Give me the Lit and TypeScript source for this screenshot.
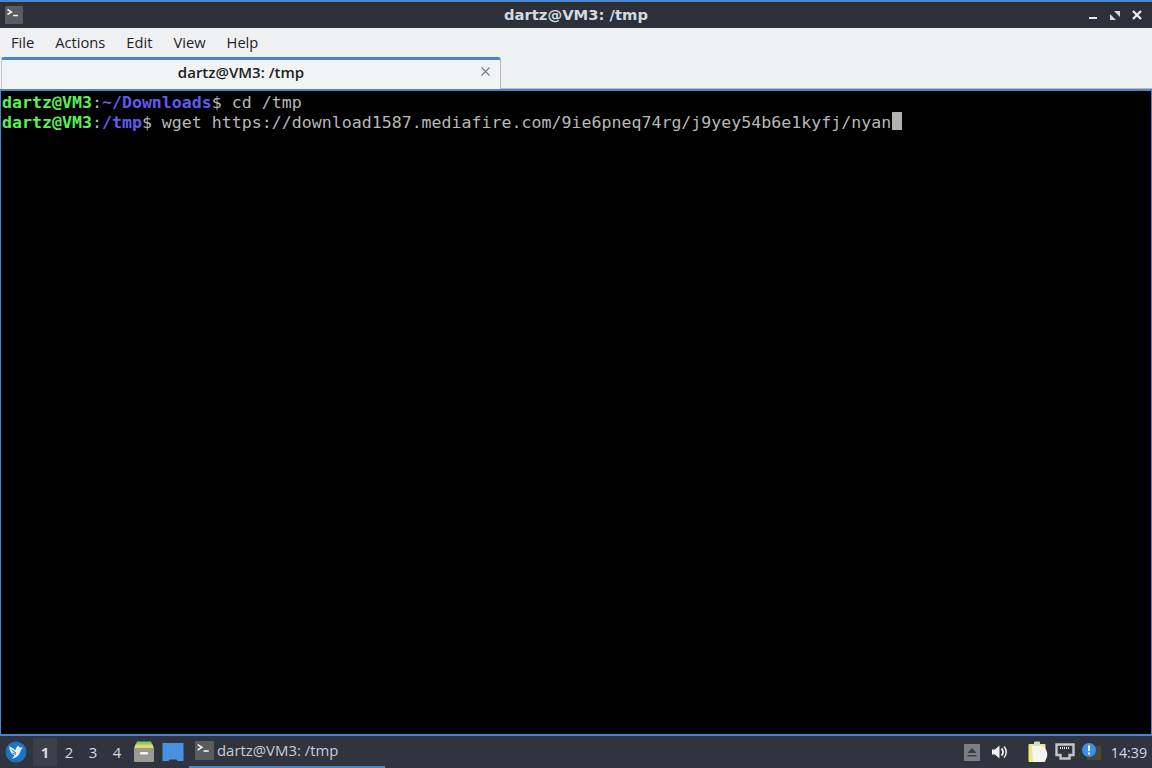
import { LitElement, html, css } from "lit";
import { customElement } from "lit/decorators.js";

const termIcon = (s: number) => html`<svg width=${s} height=${s} viewBox="0 0 18 18" class="ti">
  <rect width="18" height="18" rx="1" fill="#5a5d60"/>
  <path d="M2.5 3.5 L6.5 6 L2.5 8.5" fill="none" stroke="#f2f2f2" stroke-width="1.5"/>
  <path d="M8 9.5 H13" stroke="#f2f2f2" stroke-width="1.5"/>
</svg>`;

@customElement("app-root")
export class AppRoot extends LitElement {
  static styles = css`
    :host { display: block; width: 1152px; height: 768px; overflow: hidden; background: #2f343f; }
    .win { width: 1152px; height: 768px; display: flex; flex-direction: column; }
    .titlebar { height: 28px; box-sizing: border-box; flex: none; background: #2d3038; border-top: 2px solid #4a86c8; display: grid; grid-template-columns: 1fr auto 1fr; align-items: center; padding: 0 5px; }
    .titlebar .ti { display: block; margin-top: -1px; }
    .title { font: bold 14.75px "DejaVu Sans", sans-serif; color: #d3dae3; margin-top: -2px; }
    .wbtns { display: flex; justify-content: flex-end; gap: 12px; padding-right: 5px; align-items: center; margin-top: -1px; }
    .wbtns svg { display: block; }
    .menubar { height: 29px; flex: none; box-sizing: border-box; padding: 0 10px 2px 11px; background: #eff0f1; display: flex; align-items: center; gap: 21px; font: 14.7px "Open Sans", sans-serif; color: #1f2328; }
    .tabbar { height: 32px; flex: none; box-sizing: border-box; background: #eff0f1; display: flex; }
    .tab { width: 500px; margin-left: 1px; box-sizing: border-box; border-top: 3px solid #4a86c8; border-right: 1px solid #b4b6b8; border-left: 1px solid #c8cacc; border-radius: 3px 3px 0 0; background: #f2f3f4; display: flex; align-items: center; position: relative; justify-content: center; font: 600 15px "Open Sans", sans-serif; color: #1b1e22; padding-right: 20px; padding-bottom: 5px; }
    .tab svg { position: absolute; right: 9px; top: 6px; }
    .tabrest { flex: 1; border-bottom: 1px solid #b9bbbd; }
    .term { flex: 1; background: #000; box-sizing: border-box; border: 1px solid #4a86c8; border-top-width: 2px; border-bottom-width: 2px; padding-top: 2px; padding-left: 1px; font: 16.6px/20px "DejaVu Sans Mono", monospace; color: #b8b8b8; }
    .line { height: 20px; display: flex; white-space: pre; }
    .g { color: #5af05a; font-weight: bold; }
    .b { color: #5c5cf0; font-weight: bold; }
    .cursor { display: block; width: 10px; height: 18px; margin-top: -1px; margin-left: 1px; background: #b2b2b2; }
    .panel { height: 32px; flex: none; background: #2f343f; display: flex; align-items: center; font: 14.9px "Open Sans", sans-serif; color: #d3dae3; }
    .start { margin-left: 5px; width: 22px; height: 22px; display: block; flex: none; }
    .pages { display: flex; margin-left: 6px; }
    .page { width: 24px; height: 28px; display: flex; align-items: center; justify-content: center; color: #d3dae3; }
    .page.on { background: #3a3f4a; font-weight: 700; }
    .launch { display: flex; gap: 7px; margin-left: 4px; align-items: center; }
    .launch svg { display: block; }
    .task { width: 196px; margin-left: 5px; height: 32px; box-sizing: border-box; border-bottom: 2px solid #4a86c8; display: flex; align-items: center; gap: 3px; padding: 0 0 2px 6px; color: #c8ced6; }
    .task .ti { display: block; }
    .tray { margin-left: auto; display: flex; align-items: center; padding-right: 5px; }
    .tray svg { display: block; }
    .eject { margin-right: 12px; }
    .vol { margin-right: 20px; }
    .clip { margin-right: 7px; }
    .net { margin-right: 6px; }
    .clock { font-size: 14.2px; color: #d3dae3; margin-left: 10px; }
  `;

  render() {
    return html`<div class="win">
      <div class="titlebar">
        <div>${termIcon(18)}</div>
        <div class="title">dartz@VM3: /tmp</div>
        <div class="wbtns">
          <svg width="10" height="10" viewBox="0 0 10 10"><path d="M1 8H9" stroke="#e6e8ec" stroke-width="2"/></svg>
          <svg width="10" height="10" viewBox="0 0 10 10"><path d="M4 1H10V7Z M0 4V10H6Z" fill="#d3dae3"/></svg>
          <svg width="10" height="10" viewBox="0 0 10 10"><path d="M1 1L9 9M9 1L1 9" stroke="#eceef2" stroke-width="2.2"/></svg>
        </div>
      </div>
      <div class="menubar"><span>File</span><span>Actions</span><span>Edit</span><span>View</span><span>Help</span></div>
      <div class="tabbar">
        <div class="tab">dartz@VM3: /tmp
          <svg width="11" height="11" viewBox="0 0 11 11"><path d="M1.5 1.5L9.5 9.5M9.5 1.5L1.5 9.5" stroke="#77797c" stroke-width="1.1"/></svg>
        </div>
        <div class="tabrest"></div>
      </div>
      <div class="term">
        <div class="line"><span class="g">dartz@VM3</span><span>:</span><span class="b">~/Downloads</span><span>$ cd /tmp</span></div>
        <div class="line"><span class="g">dartz@VM3</span><span>:</span><span class="b">/tmp</span><span>$ wget https://download1587.mediafire.com/9ie6pneq74rg/j9yey54b6e1kyfj/nyan</span><span class="cursor"></span></div>
      </div>
      <div class="panel">
        <svg class="start" viewBox="0 0 22 22">
          <circle cx="11" cy="11" r="10.5" fill="#1c74c6"/>
          <path d="M4 5.5 C7 6.5 9 7.5 10.5 9.5 C10.5 7.5 11.5 5.5 13.5 4.5 C13.5 6 15 6.8 18 6.5 C16 8 16 9.5 15 11.5 C13.5 15 10.5 17.5 7 17.5 C8.5 16 9.2 15 9.4 14 C7 14 4.8 10.5 4 5.5Z" fill="#e4f0fa"/>
          <path d="M6.5 9 L11 12 M7.5 12 L11 13.5" stroke="#1c74c6" stroke-width="1"/>
        </svg>
        <div class="pages">
          <div class="page on">1</div><div class="page">2</div><div class="page">3</div><div class="page">4</div>
        </div>
        <div class="launch">
          <svg width="22" height="22" viewBox="0 0 22 22">
            <path d="M4 0.5H18L19.5 4H2.5Z" fill="#7fc97a"/>
            <path d="M2.5 3.5H19.5L21 7.5H1Z" fill="#e8d86a"/>
            <rect x="1" y="7" width="20" height="14" rx="1" fill="#9a9a92"/>
            <rect x="7" y="11" width="8" height="2.5" rx="1" fill="#f4f4ee"/>
          </svg>
          <svg width="22" height="22" viewBox="0 0 22 22">
            <path d="M0.5 2H21.5V20H15.5L14.5 18.5H7.5L6.5 20H0.5Z" fill="#4a90e0"/>
          </svg>
        </div>
        <div class="task">${termIcon(19)}<span>dartz@VM3: /tmp</span></div>
        <div class="tray">
          <svg class="eject" width="16" height="17" viewBox="0 0 16 17"><rect width="16" height="17" fill="#7c7f84"/><path d="M8 4L12.5 9H3.5Z M3.5 11H12.5V12.5H3.5Z" fill="#3a3d42"/></svg>
          <svg class="vol" width="16" height="18" viewBox="0 0 16 18"><path d="M0 6.5H3L7.5 2.5V15.5L3 11.5H0Z" fill="#f2f3f5"/><path d="M9.5 5.5C11.5 7.5 11.5 10.5 9.5 12.5" fill="none" stroke="#f2f3f5" stroke-width="2"/><path d="M12 3.5C15 6.5 15 11.5 12 14.5" fill="none" stroke="#f2f3f5" stroke-width="1.5"/></svg>
          <svg class="clip" width="20" height="22" viewBox="0 0 20 22"><rect x="0.5" y="3" width="17" height="18" rx="1" fill="#f2e68a"/><rect x="6" y="0.5" width="6" height="4" rx="1" fill="#d8d8d0"/><path d="M4 5H14C18 7 20 11 19 16C18 20 14 21 10 21H5Z" fill="#f5f5f2"/></svg>
          <svg class="net" width="20" height="18" viewBox="0 0 20 18"><path d="M1.5 1.5H18.5V12H14.5V15.5H5.5V12H1.5Z" fill="#31353d" stroke="#c2c5c9" stroke-width="2.4"/><path d="M5 5H15" stroke="#e0e0e0" stroke-width="2" stroke-dasharray="1 1"/></svg>
          <svg width="20" height="20" viewBox="0 0 20 20"><rect x="6" y="4" width="14" height="14" fill="#4a4738"/><circle cx="8" cy="8" r="7" fill="#3f8fe8"/><path d="M8 3.5V9M8 10.5V12.5" stroke="#fff" stroke-width="2"/></svg>
          <span class="clock">14:39</span>
        </div>
      </div>
    </div>`;
  }
}
